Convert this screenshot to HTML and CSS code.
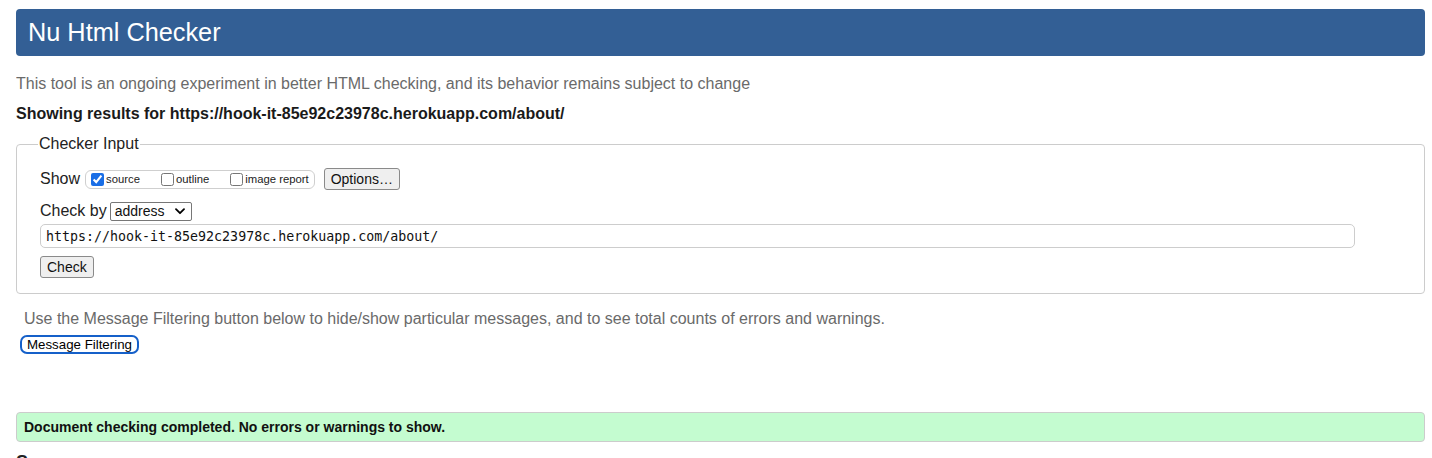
FILE: index.html
```html
<!DOCTYPE html>
<html lang="en">
<head>
<meta charset="utf-8">
<title>Nu Html Checker</title>
<link rel="stylesheet" href="styles.css">
</head>
<body>
<h1 class="title">Nu Html Checker</h1>
<p class="intro">This tool is an ongoing experiment in better HTML checking, and its behavior remains subject to change</p>
<p class="showing">Showing results for https://hook-it-85e92c23978c.herokuapp.com/about/</p>
<fieldset class="checker">
  <legend class="legend">Checker Input</legend>
  <div class="row show-row">
    <span class="label">Show</span>
    <span class="opts">
      <label class="opt"><input type="checkbox" class="cb" checked><span>source</span></label>
      <label class="opt"><input type="checkbox" class="cb"><span>outline</span></label>
      <label class="opt"><input type="checkbox" class="cb"><span>image report</span></label>
    </span>
    <button class="btn options-btn">Options…</button>
  </div>
  <div class="row by-row">
    <span class="label">Check by</span>
    <span class="select">address<svg class="chev" width="10" height="7" viewBox="0 0 10 7"><path d="M1 1.2 L5 5.2 L9 1.2" fill="none" stroke="#000" stroke-width="1.8" stroke-linecap="round" stroke-linejoin="round"/></svg></span>
  </div>
  <div class="url">https://hook-it-85e92c23978c.herokuapp.com/about/</div>
  <div class="row"><button class="btn check-btn">Check</button></div>
</fieldset>
<p class="filter-note">Use the Message Filtering button below to hide/show particular messages, and to see total counts of errors and warnings.</p>
<div class="filter-wrap"><button class="filter-btn">Message Filtering</button></div>
<div class="success">Document checking completed. No errors or warnings to show.</div>
<h2 class="source">Source</h2>
</body>
</html>
```
FILE: styles.css
```css
html, body { background: #fff; }
body {
  margin: 9px 7px 0 16px;
  font-family: "Liberation Sans", Arial, sans-serif;
  color: #222;
  overflow: hidden;
}
.title {
  margin: 0;
  height: 47px;
  box-sizing: border-box;
  padding: 0 12px;
  display: flex;
  align-items: center;
  background: #335f95;
  color: #fff;
  font-size: 25.3px;
  font-weight: normal;
  border-radius: 4px;
}
.intro {
  margin: 19px 0 0 0;
  font-size: 16px;
  line-height: 18px;
  color: #6a6a6a;
}
.showing {
  margin: 12px 0 0 0;
  font-size: 16px;
  line-height: 18px;
  font-weight: bold;
  color: #1a1a1a;
}
.checker {
  margin: 12px 0 0 0;
  padding: 15px 23px 15px 23px;
  border: 1px solid #cccccc;
  border-radius: 4px;
  min-width: 0;
}
.legend {
  padding: 0 1px;
  margin-left: -2px;
  font-size: 16px;
  color: #222;
}
.row {
  display: flex;
  align-items: center;
}
.label {
  font-size: 16px;
  color: #222;
}
.show-row { height: 22px; }
.opts {
  margin-left: 5px;
  display: flex;
  align-items: center;
  height: 17px;
  padding: 0 5px 0 5px;
  border: 1px solid #cfcfcf;
  border-radius: 6px;
}
.opt {
  display: flex;
  align-items: center;
  font-size: 11.3px;
  color: #222;
}
.opt + .opt { margin-left: 21px; }
.cb {
  margin: 0 2px 0 0;
  width: 13px;
  height: 13px;
  accent-color: #1a6ee6;
}
.btn {
  font-family: "Liberation Sans", Arial, sans-serif;
  font-size: 14px;
  color: #111;
  background: #efefef;
  border: 1px solid #8a8a8a;
  border-radius: 3px;
  padding: 0 6px;
  height: 22px;
  line-height: 20px;
}
.options-btn { margin-left: 9px; }
.by-row { margin-top: 11px; height: 20px; }
.select {
  margin-left: 3px;
  width: 82px;
  height: 19px;
  box-sizing: border-box;
  border: 1px solid #777;
  border-radius: 2px;
  display: flex;
  align-items: center;
  justify-content: space-between;
  padding: 0 6px 0 4px;
  font-size: 14px;
  color: #111;
}
.chev { display: block; }
.url {
  margin-top: 3px;
  width: 1315px;
  height: 24px;
  box-sizing: border-box;
  border: 1px solid #cdcdcd;
  border-radius: 5px;
  padding: 0 5px;
  display: flex;
  align-items: center;
  font-family: "DejaVu Sans Mono", "Liberation Mono", monospace;
  font-size: 13.3px;
  color: #111;
}
.check-btn { margin-top: 8px; }
.filter-note {
  margin: 16px 0 0 8px;
  font-size: 16px;
  line-height: 18px;
  color: #6a6a6a;
}
.filter-wrap { margin: 7px 0 0 4px; display: flex; }
.filter-btn {
  font-family: "Liberation Sans", Arial, sans-serif;
  font-size: 13.3px;
  color: #000;
  background: #fff;
  border: 2px solid #1560c9;
  border-radius: 7px;
  height: 19px;
  padding: 0 5px;
  line-height: 15px;
}
.success {
  margin-top: 58px;
  height: 30px;
  box-sizing: border-box;
  border: 1px solid #cccccc;
  border-radius: 4px;
  background: #c4fcd0;
  padding: 0 7px;
  display: flex;
  align-items: center;
  font-size: 14px;
  font-weight: bold;
  color: #111;
}
.source {
  margin: 10px 0 0 0;
  font-size: 18px;
  line-height: 20px;
  color: #222;
}
```
